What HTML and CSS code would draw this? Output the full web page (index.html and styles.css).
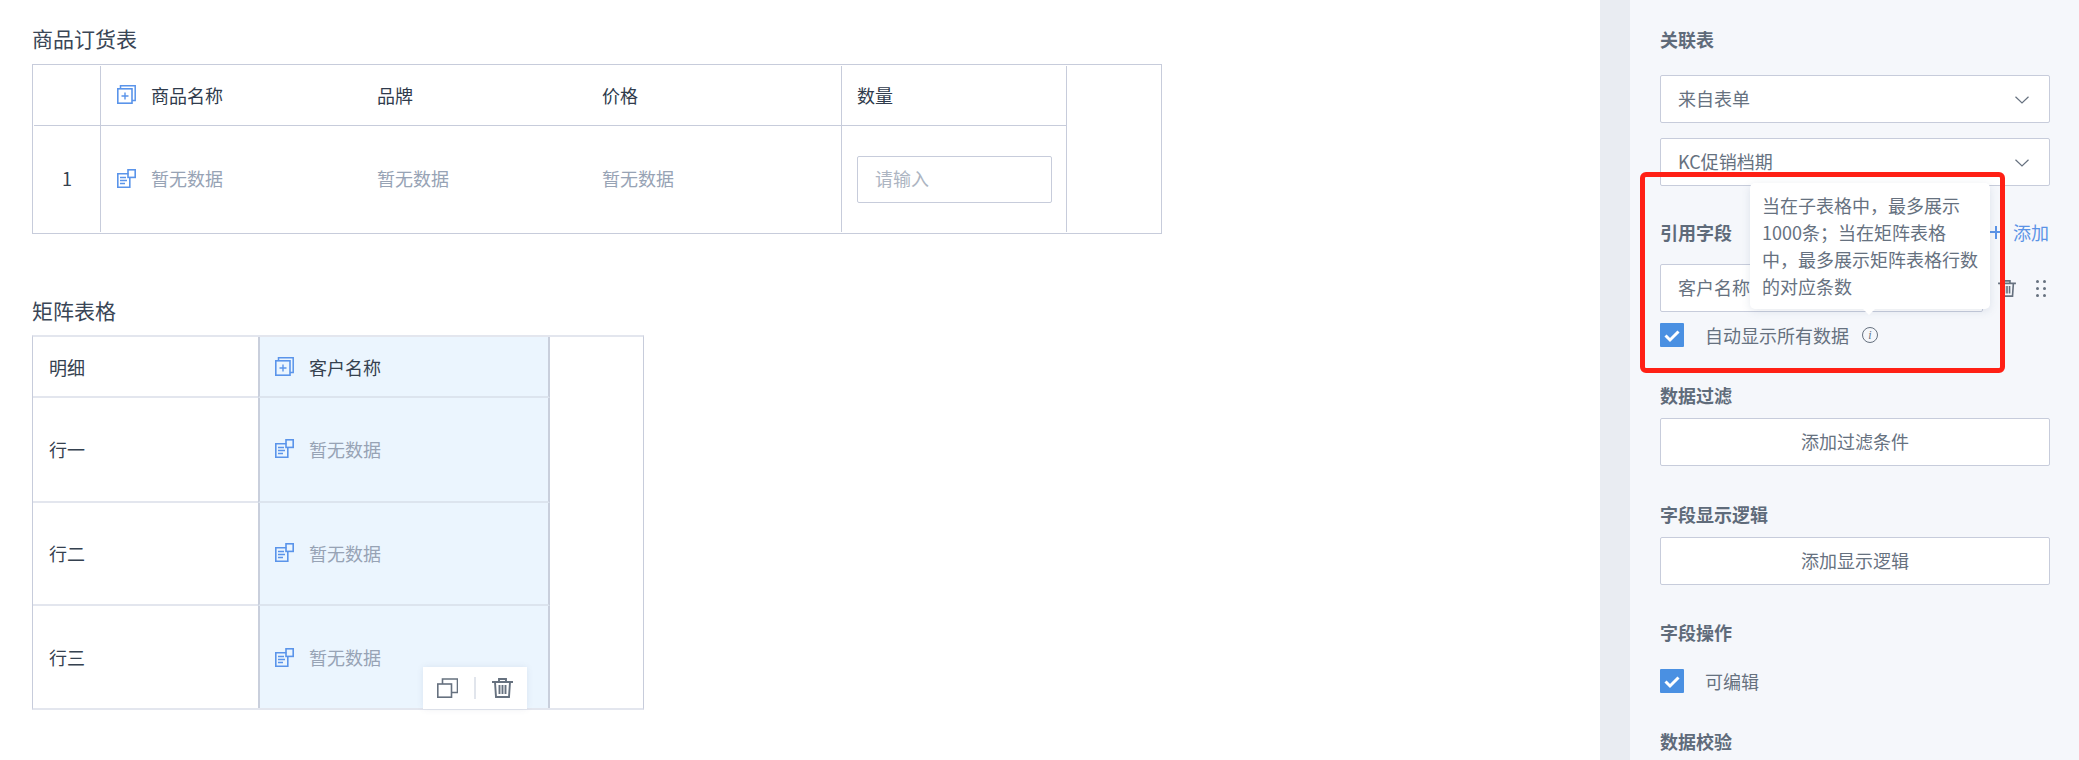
FILE: index.html
```html
<!DOCTYPE html>
<html lang="zh-CN">
<head>
  <meta charset="utf-8">
  <title>表单设计</title>
  <link rel="stylesheet" href="styles.css">
</head>
<body>
  <!-- shared icons -->
  <svg class="sprite">
    <symbol id="icon-add-table" viewBox="0 0 19 19">
      <path d="M3.500 3.500V0.800h14.700v14.700H15" fill="none" stroke="currentColor" stroke-width="1.5"/>
      <rect x="0.800" y="3.800" width="14.200" height="14.400" fill="none" stroke="currentColor" stroke-width="1.600"/>
      <path d="M8 7.500v7M4.500 11h7" fill="none" stroke="currentColor" stroke-width="1.400"/>
    </symbol>
    <symbol id="icon-data" viewBox="0 0 19 19">
      <path d="M11.500 4.800H0.800v13.400h12V9" fill="none" stroke="currentColor" stroke-width="1.600"/>
      <rect x="11" y="0.800" width="7.200" height="7.600" fill="none" stroke="currentColor" stroke-width="1.600"/>
      <path d="M3 8.500h6M3 11.500h7M3 14.500h5" fill="none" stroke="currentColor" stroke-width="1.400"/>
    </symbol>
    <symbol id="icon-trash" viewBox="0 0 21 20">
      <path d="M0 4h21M7 4V1h7v3M3 4l1 15h13l1-15M7.500 7v9M10.500 7v9M13.500 7v9" fill="none" stroke="currentColor" stroke-width="1.900"/>
    </symbol>
    <symbol id="icon-chevron" viewBox="0 0 14 8">
      <path d="M0.500 0.700L7 7l6.500-6.300" fill="none" stroke="currentColor" stroke-width="1.200"/>
    </symbol>
    <symbol id="icon-check" viewBox="0 0 24 24">
      <path d="M5.500 12.500l4.500 4.500 8.500-8.500" fill="none" stroke="currentColor" stroke-width="3"/>
    </symbol>
  </svg>

  <div class="page">
    <main class="canvas">
      <h3 class="widget-title">商品订货表</h3>
      <div class="order-table">
        <div class="cell cell-index"></div>
        <div class="cell cell-head">
          <svg class="field-icon"><use href="#icon-add-table"></use></svg>商品名称
        </div>
        <div class="cell cell-head">品牌</div>
        <div class="cell cell-head">价格</div>
        <div class="cell cell-head cell-qty">数量</div>
        <div class="cell-spare"></div>

        <div class="cell cell-index cell-last">1</div>
        <div class="cell cell-empty cell-last">
          <svg class="field-icon"><use href="#icon-data"></use></svg>暂无数据
        </div>
        <div class="cell cell-empty cell-last">暂无数据</div>
        <div class="cell cell-empty cell-last">暂无数据</div>
        <div class="cell cell-qty cell-last">
          <div class="qty-input">请输入</div>
        </div>
      </div>

      <h3 class="widget-title widget-title-matrix">矩阵表格</h3>
      <div class="matrix-table">
        <div class="mcell mcell-top mcell-label">明细</div>
        <div class="mcell mcell-top mcell-field mcell-head">
          <svg class="field-icon"><use href="#icon-add-table"></use></svg>客户名称
        </div>
        <div class="mcell-spare"></div>

        <div class="mcell mcell-label">行一</div>
        <div class="mcell mcell-field">
          <svg class="field-icon"><use href="#icon-data"></use></svg>暂无数据
        </div>

        <div class="mcell mcell-label">行二</div>
        <div class="mcell mcell-field">
          <svg class="field-icon"><use href="#icon-data"></use></svg>暂无数据
        </div>

        <div class="mcell mcell-label mcell-bottom">行三</div>
        <div class="mcell mcell-field mcell-bottom">
          <svg class="field-icon"><use href="#icon-data"></use></svg>暂无数据
          <div class="cell-actions">
            <svg class="action-icon" viewBox="0 0 21 20">
              <path d="M5.500 6V1h15v13.500h-6" fill="none" stroke="currentColor" stroke-width="1.600"/>
              <rect x="0.800" y="6" width="13.700" height="13.200" fill="none" stroke="currentColor" stroke-width="1.600"/>
            </svg>
            <span class="action-sep"></span>
            <svg class="action-icon"><use href="#icon-trash"></use></svg>
          </div>
        </div>
      </div>
    </main>

    <div class="splitter"></div>

    <aside class="panel">
      <div class="panel-label panel-label-first">关联表</div>
      <div class="select">来自表单<svg class="chevron"><use href="#icon-chevron"></use></svg></div>
      <div class="select select-next">KC促销档期<svg class="chevron"><use href="#icon-chevron"></use></svg></div>

      <div class="panel-head">
        <div class="panel-label">引用字段</div>
        <div class="add-link"><span class="add-plus"></span>添加</div>
      </div>
      <div class="ref-row">
        <div class="select ref-input">客户名称</div>
        <svg class="ref-trash"><use href="#icon-trash"></use></svg>
        <div class="drag-dots"><i></i><i></i><i></i><i></i><i></i><i></i></div>
      </div>
      <label class="check-row check-row-ref">
        <span class="check"><svg class="check-mark"><use href="#icon-check"></use></svg></span>
        自动显示所有数据
        <span class="info">i</span>
      </label>

      <div class="panel-label panel-label-gap">数据过滤</div>
      <div class="select select-btn">添加过滤条件</div>

      <div class="panel-label panel-label-gap">字段显示逻辑</div>
      <div class="select select-btn">添加显示逻辑</div>

      <div class="panel-label panel-label-gap panel-label-check">字段操作</div>
      <label class="check-row">
        <span class="check"><svg class="check-mark"><use href="#icon-check"></use></svg></span>
        可编辑
      </label>

      <div class="panel-label panel-label-gap">数据校验</div>

      <!-- hover tip on the info icon -->
      <div class="tooltip">当在子表格中，最多展示1000条；当在矩阵表格中，最多展示矩阵表格行数的对应条数</div>
      <!-- red annotation drawn on the screenshot -->
      <div class="annotation"></div>
    </aside>
  </div>
</body>
</html>
```

FILE: styles.css
```css
* {
  box-sizing: border-box;
}

html,
body {
  margin: 0;
  height: 100%;
  overflow: hidden;
}

body {
  font-family: "Noto Sans CJK SC", "Noto Sans", sans-serif;
  font-size: 18px;
  color: #35414f;
  background: white;
}

.sprite {
  display: none;
}

.page {
  display: flex;
  height: 760px;
}

/* Canvas */
.canvas {
  width: 1600px;
  flex: none;
  padding: 26px 0 0 32px;
}

.widget-title {
  margin: 0 0 14px;
  font-size: 21px;
  line-height: 24px;
  font-weight: 400;
  color: #3a4656;
}

.widget-title-matrix {
  margin: 64px 0 13px;
}

.order-table {
  display: grid;
  grid-template-columns: 67px 260px 225px 255px 226px 1fr;
  grid-template-rows: 60px 106px;
  width: 1130px;
  height: 170px;
  padding: 1px;
  border: 1px solid #c7ccdb;
}

.cell {
  display: flex;
  align-items: center;
  padding-left: 16px;
  padding-bottom: 2px;
  border-bottom: 1px solid #c7ccdb;
}

.cell-last {
  border-bottom: none;
}

.cell-index {
  justify-content: center;
  padding-left: 0;
  border-right: 1px solid #c7ccdb;
}

.cell-head {
  color: #2f3b4c;
}

.cell-empty {
  color: #97a3b5;
}

.cell-qty {
  padding-left: 15px;
  padding-right: 14px;
  border-left: 1px solid #c7ccdb;
  border-right: 1px solid #c7ccdb;
}

.cell-qty.cell-last {
  padding-bottom: 0;
}

.cell-spare {
  grid-row: 1 / span 2;
  grid-column: 6;
}

.qty-input {
  flex: 1;
  height: 47px;
  padding: 0 0 2px 17px;
  display: flex;
  align-items: center;
  color: #adb5c2;
  border: 1px solid #c7ccdb;
  border-radius: 2px;
}

.field-icon {
  flex: none;
  width: 19px;
  height: 19px;
  margin-right: 15px;
  color: #5a94ea;
}

.matrix-table {
  display: grid;
  grid-template-columns: 225px 292px 1fr;
  grid-template-rows: 61px 105px 103px 102px;
  width: 612px;
  height: 375px;
  border: 1px solid #c7ccdb;
  border-top: 2px solid #e3e6ee;
  border-bottom: 2px solid #e3e6ee;
}

.mcell {
  display: flex;
  align-items: center;
  padding-bottom: 2px;
  border-bottom: 2px solid #e3e6ee;
}

.mcell-top {
  padding-bottom: 0;
}

.mcell-label {
  padding-left: 16px;
  color: #35414f;
}

.mcell-field {
  position: relative;
  padding-left: 15px;
  color: #97a3b5;
  background: #ebf5fe;
  border-left: 2px solid #c9cfdc;
  border-right: 2px solid #c9cfdc;
  border-bottom-color: #dce4ee;
}

.mcell-head {
  color: #35414f;
}

.mcell-bottom {
  padding-bottom: 0;
  border-bottom: none;
}

.mcell-spare {
  grid-column: 3;
  grid-row: 1 / span 4;
}

.cell-actions {
  position: absolute;
  right: 21px;
  bottom: -1px;
  display: flex;
  align-items: center;
  height: 42px;
  padding: 0 14px;
  background: white;
  box-shadow: 0 0 6px rgba(90, 110, 140, 0.12);
}

.action-icon {
  width: 21px;
  height: 20px;
  color: #66717f;
}

.action-sep {
  width: 2px;
  height: 22px;
  margin: 0 16px;
  background: #e1e5ec;
}

/* Divider between canvas and settings */
.splitter {
  width: 30px;
  flex: none;
  background: #e9ecf2;
}

/* Settings panel */
.panel {
  position: relative;
  flex: 1;
  padding: 27px 29px 0 30px;
  background: #f5f7fb;
  color: #66717f;
}

.panel-label {
  font-weight: 700;
  line-height: 24px;
  margin-bottom: 11px;
  color: #5f6b7a;
}

.panel-label-first {
  margin-bottom: 24px;
}

.panel-label-gap {
  margin-top: 36px;
}

.panel-label-check {
  margin-top: 35px;
  margin-bottom: 25px;
}

.select {
  position: relative;
  display: flex;
  align-items: center;
  height: 48px;
  padding: 0 0 2px 17px;
  background: white;
  border: 1px solid #c7ccdb;
  border-radius: 2px;
}

.select-next {
  margin-top: 15px;
}

.select-btn {
  justify-content: center;
  padding-left: 0;
}

.chevron {
  position: absolute;
  right: 20px;
  top: 20px;
  width: 14px;
  height: 8px;
  color: #66717f;
}

.panel-head {
  display: flex;
  justify-content: space-between;
  align-items: center;
  margin-top: 34px;
  margin-bottom: 20px;
}

.panel-head .panel-label {
  margin-bottom: 0;
}

.add-link {
  display: flex;
  align-items: center;
  margin-right: 1px;
  line-height: 24px;
  color: #5b93e6;
}

/* plus sign built from two bars */
.add-plus {
  width: 13px;
  height: 13px;
  margin-right: 11px;
  background:
    linear-gradient(#5b93e6, #5b93e6) center / 13px 2px no-repeat,
    linear-gradient(#5b93e6, #5b93e6) center / 2px 13px no-repeat;
}

.ref-row {
  display: flex;
  align-items: center;
  height: 48px;
}

.ref-input {
  width: 323px;
  flex: none;
}

.ref-trash {
  width: 18px;
  height: 17px;
  margin-left: 15px;
  color: #66717f;
}

.drag-dots {
  display: grid;
  grid-template-columns: 3px 3px;
  gap: 4px 4px;
  margin-left: 20px;
}

.drag-dots i {
  width: 3px;
  height: 3px;
  border-radius: 50%;
  background: #66717f;
}

.check-row {
  display: flex;
  align-items: center;
  height: 24px;
  margin-bottom: 1px;
  line-height: 24px;
}

.check-row-ref {
  margin-top: 11px;
}

.check {
  display: block;
  width: 24px;
  height: 24px;
  margin-right: 21px;
  color: white;
  background: #4a90e2;
  border-radius: 1px;
}

.check-mark {
  display: block;
  width: 24px;
  height: 24px;
}

.info {
  width: 16px;
  height: 16px;
  margin-left: 13px;
  font: italic 12px/14px "Liberation Serif", serif;
  text-align: center;
  border: 1px solid #66717f;
  border-radius: 50%;
}

.tooltip {
  position: absolute;
  left: 120px;
  top: 183px;
  width: 240px;
  height: 126px;
  padding: 9px 12px;
  line-height: 27px;
  color: #66717f;
  background: white;
  border-radius: 5px;
  box-shadow: 0 2px 8px rgba(90, 110, 140, 0.15);
}

.tooltip::after {
  content: "";
  position: absolute;
  left: 113px;
  bottom: -6px;
  border-left: 6px solid transparent;
  border-right: 6px solid transparent;
  border-top: 6px solid white;
}

.annotation {
  position: absolute;
  left: 10px;
  top: 172px;
  width: 365px;
  height: 201px;
  border: 5px solid #ff2015;
  border-radius: 6px;
}
```
